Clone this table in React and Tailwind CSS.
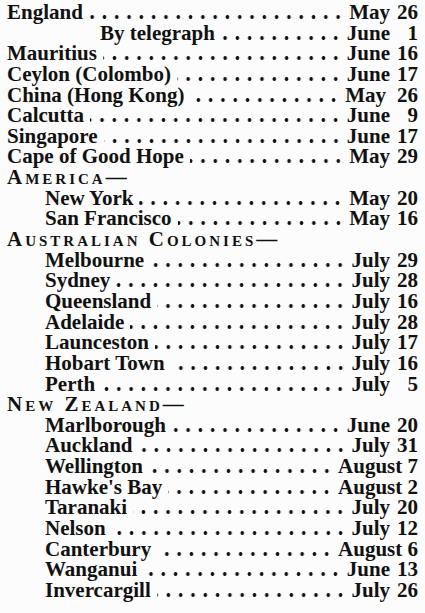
import React from "react";

const rows = [
  { t: "e", name: "England", indent: 0, m: "May", d: "26" },
  { t: "e", name: "By telegraph", indent: 2, m: "June", d: "1" },
  { t: "e", name: "Mauritius", indent: 0, m: "June", d: "16" },
  { t: "e", name: "Ceylon (Colombo)", indent: 0, m: "June", d: "17" },
  { t: "e", name: "China (Hong Kong)", indent: 0, m: "May", d: "26", wide: true },
  { t: "e", name: "Calcutta", indent: 0, m: "June", d: "9" },
  { t: "e", name: "Singapore", indent: 0, m: "June", d: "17" },
  { t: "e", name: "Cape of Good Hope", indent: 0, m: "May", d: "29" },
  { t: "h", name: "America" },
  { t: "e", name: "New York", indent: 1, m: "May", d: "20" },
  { t: "e", name: "San Francisco", indent: 1, m: "May", d: "16" },
  { t: "h", name: "Australian Colonies" },
  { t: "e", name: "Melbourne", indent: 1, m: "July", d: "29" },
  { t: "e", name: "Sydney", indent: 1, m: "July", d: "28" },
  { t: "e", name: "Queensland", indent: 1, m: "July", d: "16" },
  { t: "e", name: "Adelaide", indent: 1, m: "July", d: "28" },
  { t: "e", name: "Launceston", indent: 1, m: "July", d: "17" },
  { t: "e", name: "Hobart Town", indent: 1, m: "July", d: "16" },
  { t: "e", name: "Perth", indent: 1, m: "July", d: "5" },
  { t: "h", name: "New Zealand" },
  { t: "e", name: "Marlborough", indent: 1, m: "June", d: "20" },
  { t: "e", name: "Auckland", indent: 1, m: "July", d: "31" },
  { t: "e", name: "Wellington", indent: 1, m: "August", d: "7", plain: true },
  { t: "e", name: "Hawke's Bay", indent: 1, m: "August", d: "2", plain: true },
  { t: "e", name: "Taranaki", indent: 1, m: "July", d: "20" },
  { t: "e", name: "Nelson", indent: 1, m: "July", d: "12" },
  { t: "e", name: "Canterbury", indent: 1, m: "August", d: "6", plain: true },
  { t: "e", name: "Wanganui", indent: 1, m: "June", d: "13" },
  { t: "e", name: "Invercargill", indent: 1, m: "July", d: "26" },
];

function Entry({ r }) {
  const indentCls =
    r.indent === 2 ? "pl-[93px]" : r.indent === 1 ? "pl-[38px]" : "pl-0";
  return (
    <div className={`flex items-baseline ${indentCls}`}>
      <span className="shrink-0 whitespace-nowrap">{r.name}</span>
      <span className="ml-[6px] mr-[5px] block h-[4px] min-w-0 flex-1 bg-[radial-gradient(circle,#111_1.6px,transparent_2.1px)] bg-[length:12.3px_4px] bg-right bg-repeat-x"></span>
      {r.plain ? (
        <span className="shrink-0 whitespace-nowrap">
          {r.m} {r.d}
        </span>
      ) : (
        <span className="flex shrink-0 items-baseline whitespace-nowrap">
          <span>{r.m}</span>
          <span className={`${r.wide ? "w-[32px]" : "w-[28px]"} text-right`}>{r.d}</span>
        </span>
      )}
    </div>
  );
}

function Heading({ r }) {
  return (
    <div className="whitespace-nowrap tracking-[3px] [font-variant:small-caps]">
      {r.name}—
    </div>
  );
}

export default function App() {
  return (
    <div className="h-[613px] w-[425px] overflow-hidden bg-[#fcfcfc] text-[#111]">
      <div className="px-[7px] pt-[2px] font-['Liberation_Serif'] text-[21px] font-bold leading-[20.64px]">
        {rows.map((r, i) =>
          r.t === "h" ? <Heading key={i} r={r} /> : <Entry key={i} r={r} />
        )}
      </div>
    </div>
  );
}
